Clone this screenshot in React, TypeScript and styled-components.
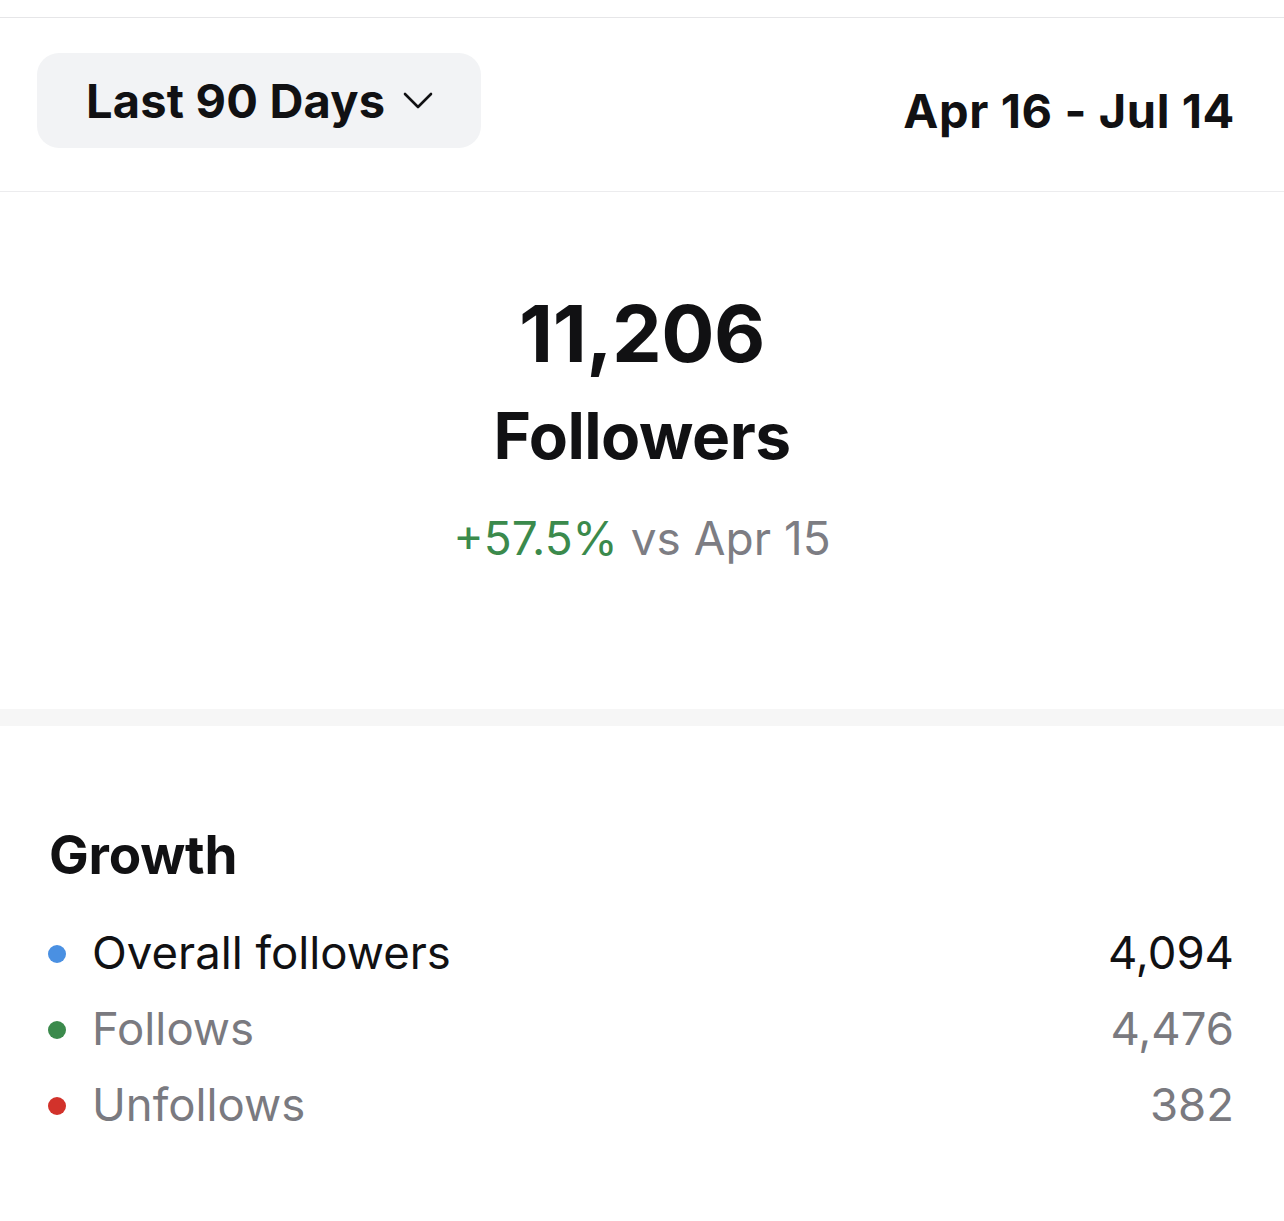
import React from "react";
import styled, { createGlobalStyle } from "styled-components";

const GlobalStyle = createGlobalStyle`
  body {
    margin: 0;
    background: #ffffff;
    font-family: Inter, "Noto Sans", "Liberation Sans", sans-serif;
    color: #111113;
  }
`;

const Page = styled.div`
  width: 1284px;
  padding-top: 17px;
`;

const Header = styled.div`
  display: flex;
  align-items: flex-start;
  justify-content: space-between;
  height: 175px;
  padding: 35px 50px 0 37px;
  box-sizing: border-box;
  border-top: 1px solid #e6e6e8;
  border-bottom: 1px solid #ececee;
`;

const RangeButton = styled.button`
  display: flex;
  align-items: center;
  gap: 18px;
  width: 444px;
  height: 95px;
  padding: 0 0 0 49px;
  border: none;
  border-radius: 22px;
  background: #f2f3f5;
  font-family: inherit;
  font-size: 47px;
  font-weight: 700;
  letter-spacing: 0.2px;
  color: #111113;
  cursor: pointer;
`;

const DateRange = styled.div`
  margin: 30px -1px 0 0;
  font-size: 47px;
  font-weight: 700;
  letter-spacing: 0.6px;
  line-height: 1.2;
`;

const Summary = styled.div`
  display: flex;
  flex-direction: column;
  align-items: center;
  height: 517px;
  padding-top: 94px;
  box-sizing: border-box;
`;

const Total = styled.div`
  font-size: 79px;
  font-weight: 700;
  letter-spacing: -0.5px;
  line-height: 1.2;
`;

const TotalLabel = styled.div`
  font-size: 64px;
  font-weight: 700;
  letter-spacing: -0.5px;
  line-height: 1.2;
  margin-top: 17px;
`;

const Change = styled.div`
  margin-top: 36px;
  font-size: 46px;
  font-weight: 400;
  line-height: 1.2;
  color: #7d7d83;
`;

const Positive = styled.span`
  color: #3b8a4c;
`;

const Band = styled.div`
  height: 17px;
  background: #f6f6f6;
`;

const Growth = styled.section`
  padding: 98px 50px 0 48px;
`;

const Title = styled.h2`
  margin: 0 0 28px 1px;
  font-size: 53px;
  font-weight: 700;
  letter-spacing: -0.2px;
  line-height: 1.2;
`;

const Row = styled.div`
  display: flex;
  align-items: center;
  height: 76px;
`;

const Dot = styled.span<{ $color: string }>`
  width: 18px;
  height: 18px;
  border-radius: 50%;
  background: ${(p) => p.$color};
  margin-right: 26px;
  flex-shrink: 0;
`;

const Label = styled.span<{ $muted?: boolean }>`
  flex: 1;
  font-size: 45.5px;
  line-height: 1.2;
  color: ${(p) => (p.$muted ? "#7a7a80" : "#111113")};
`;

const Value = styled.span<{ $muted?: boolean }>`
  font-size: 45.5px;
  line-height: 1.2;
  color: ${(p) => (p.$muted ? "#7a7a80" : "#111113")};
`;

const rows = [
  { label: "Overall followers", value: "4,094", color: "#4a90e2", muted: false },
  { label: "Follows", value: "4,476", color: "#3b8a4c", muted: true },
  { label: "Unfollows", value: "382", color: "#d2322b", muted: true },
];

const Chevron = () => (
  <svg width="30" height="18" viewBox="0 0 30 18" fill="none">
    <path d="M2 2l13 13L28 2" stroke="#111113" strokeWidth="2.6" strokeLinecap="round" strokeLinejoin="round" />
  </svg>
);

const App = () => {
  return (
    <Page>
      <GlobalStyle />
      <Header>
        <RangeButton>
          <span>Last 90 Days</span>
          <Chevron />
        </RangeButton>
        <DateRange>Apr 16 - Jul 14</DateRange>
      </Header>
      <Summary>
        <Total>11,206</Total>
        <TotalLabel>Followers</TotalLabel>
        <Change>
          <Positive>+57.5%</Positive> vs Apr 15
        </Change>
      </Summary>
      <Band />
      <Growth>
        <Title>Growth</Title>
        {rows.map((r) => (
          <Row key={r.label}>
            <Dot $color={r.color} />
            <Label $muted={r.muted}>{r.label}</Label>
            <Value $muted={r.muted}>{r.value}</Value>
          </Row>
        ))}
      </Growth>
    </Page>
  );
};

export default App;
